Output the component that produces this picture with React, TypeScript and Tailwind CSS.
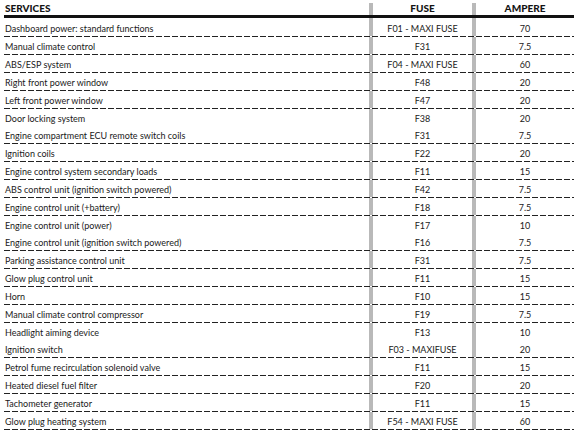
import React from 'react';

type Row = { service: string; fuse: string; amp: string };

const rows: Row[] = [
  { service: 'Dashboard power: standard functions', fuse: 'F01 - MAXI FUSE', amp: '70' },
  { service: 'Manual climate control', fuse: 'F31', amp: '7.5' },
  { service: 'ABS/ESP system', fuse: 'F04 - MAXI FUSE', amp: '60' },
  { service: 'Right front power window', fuse: 'F48', amp: '20' },
  { service: 'Left front power window', fuse: 'F47', amp: '20' },
  { service: 'Door locking system', fuse: 'F38', amp: '20' },
  { service: 'Engine compartment ECU remote switch coils', fuse: 'F31', amp: '7.5' },
  { service: 'Ignition coils', fuse: 'F22', amp: '20' },
  { service: 'Engine control system secondary loads', fuse: 'F11', amp: '15' },
  { service: 'ABS control unit (ignition switch powered)', fuse: 'F42', amp: '7.5' },
  { service: 'Engine control unit (+battery)', fuse: 'F18', amp: '7.5' },
  { service: 'Engine control unit (power)', fuse: 'F17', amp: '10' },
  { service: 'Engine control unit (ignition switch powered)', fuse: 'F16', amp: '7.5' },
  { service: 'Parking assistance control unit', fuse: 'F31', amp: '7.5' },
  { service: 'Glow plug control unit', fuse: 'F11', amp: '15' },
  { service: 'Horn', fuse: 'F10', amp: '15' },
  { service: 'Manual climate control compressor', fuse: 'F19', amp: '7.5' },
  { service: 'Headlight aiming device', fuse: 'F13', amp: '10' },
  { service: 'Ignition switch', fuse: 'F03 - MAXIFUSE', amp: '20' },
  { service: 'Petrol fume recirculation solenoid valve', fuse: 'F11', amp: '15' },
  { service: 'Heated diesel fuel filter', fuse: 'F20', amp: '20' },
  { service: 'Tachometer generator', fuse: 'F11', amp: '15' },
  { service: 'Glow plug heating system', fuse: 'F54 - MAXI FUSE', amp: '60' },
];

const cols = 'grid grid-cols-[365px_4px_99px_4px_98px]';

export default function App() {
  return (
    <div className="w-[575px] h-[433px] bg-white text-[#1a1a1a] text-[9px] font-['Lato','Open_Sans',sans-serif] overflow-hidden">
      <div className="ml-[4px] w-[570px] flex flex-col">
        {/* header */}
        <div className={`${cols} h-[15px] font-black text-[10px] text-[#141414]`}>
          <div className="flex items-end pl-[1px] leading-none pb-[2px]">SERVICES</div>
          <div className="bg-[#b9b9b9] mt-[3px]" />
          <div className="flex items-end justify-center leading-none pb-[2px]">FUSE</div>
          <div className="bg-[#b9b9b9] mt-[3px]" />
          <div className="flex items-end justify-center leading-none pb-[2px]">AMPERE</div>
        </div>
        <div className="h-[3px] bg-[#111]" />
        <div className={`${cols} h-[1px]`}>
          <div />
          <div className="bg-[#b9b9b9]" />
          <div />
          <div className="bg-[#b9b9b9]" />
          <div />
        </div>

        {rows.map((r, i) => (
          <div key={i} className={`flex flex-col ${i % 6 === 5 ? 'h-[17px]' : 'h-[18px]'}`}>
            <div className={`${cols} flex-1`}>
              <div className="flex items-center pl-[1px] pt-[3px]">{r.service}</div>
              <div className="bg-[#b9b9b9]" />
              <div className="flex items-center justify-center pt-[3px]">{r.fuse}</div>
              <div className="bg-[#b9b9b9]" />
              <div className="flex items-center justify-center pt-[3px]">{r.amp}</div>
            </div>
            <div className="h-[1px] bg-[repeating-linear-gradient(90deg,#222_0_6px,transparent_6px_8px)]" />
          </div>
        ))}
      </div>
    </div>
  );
}
